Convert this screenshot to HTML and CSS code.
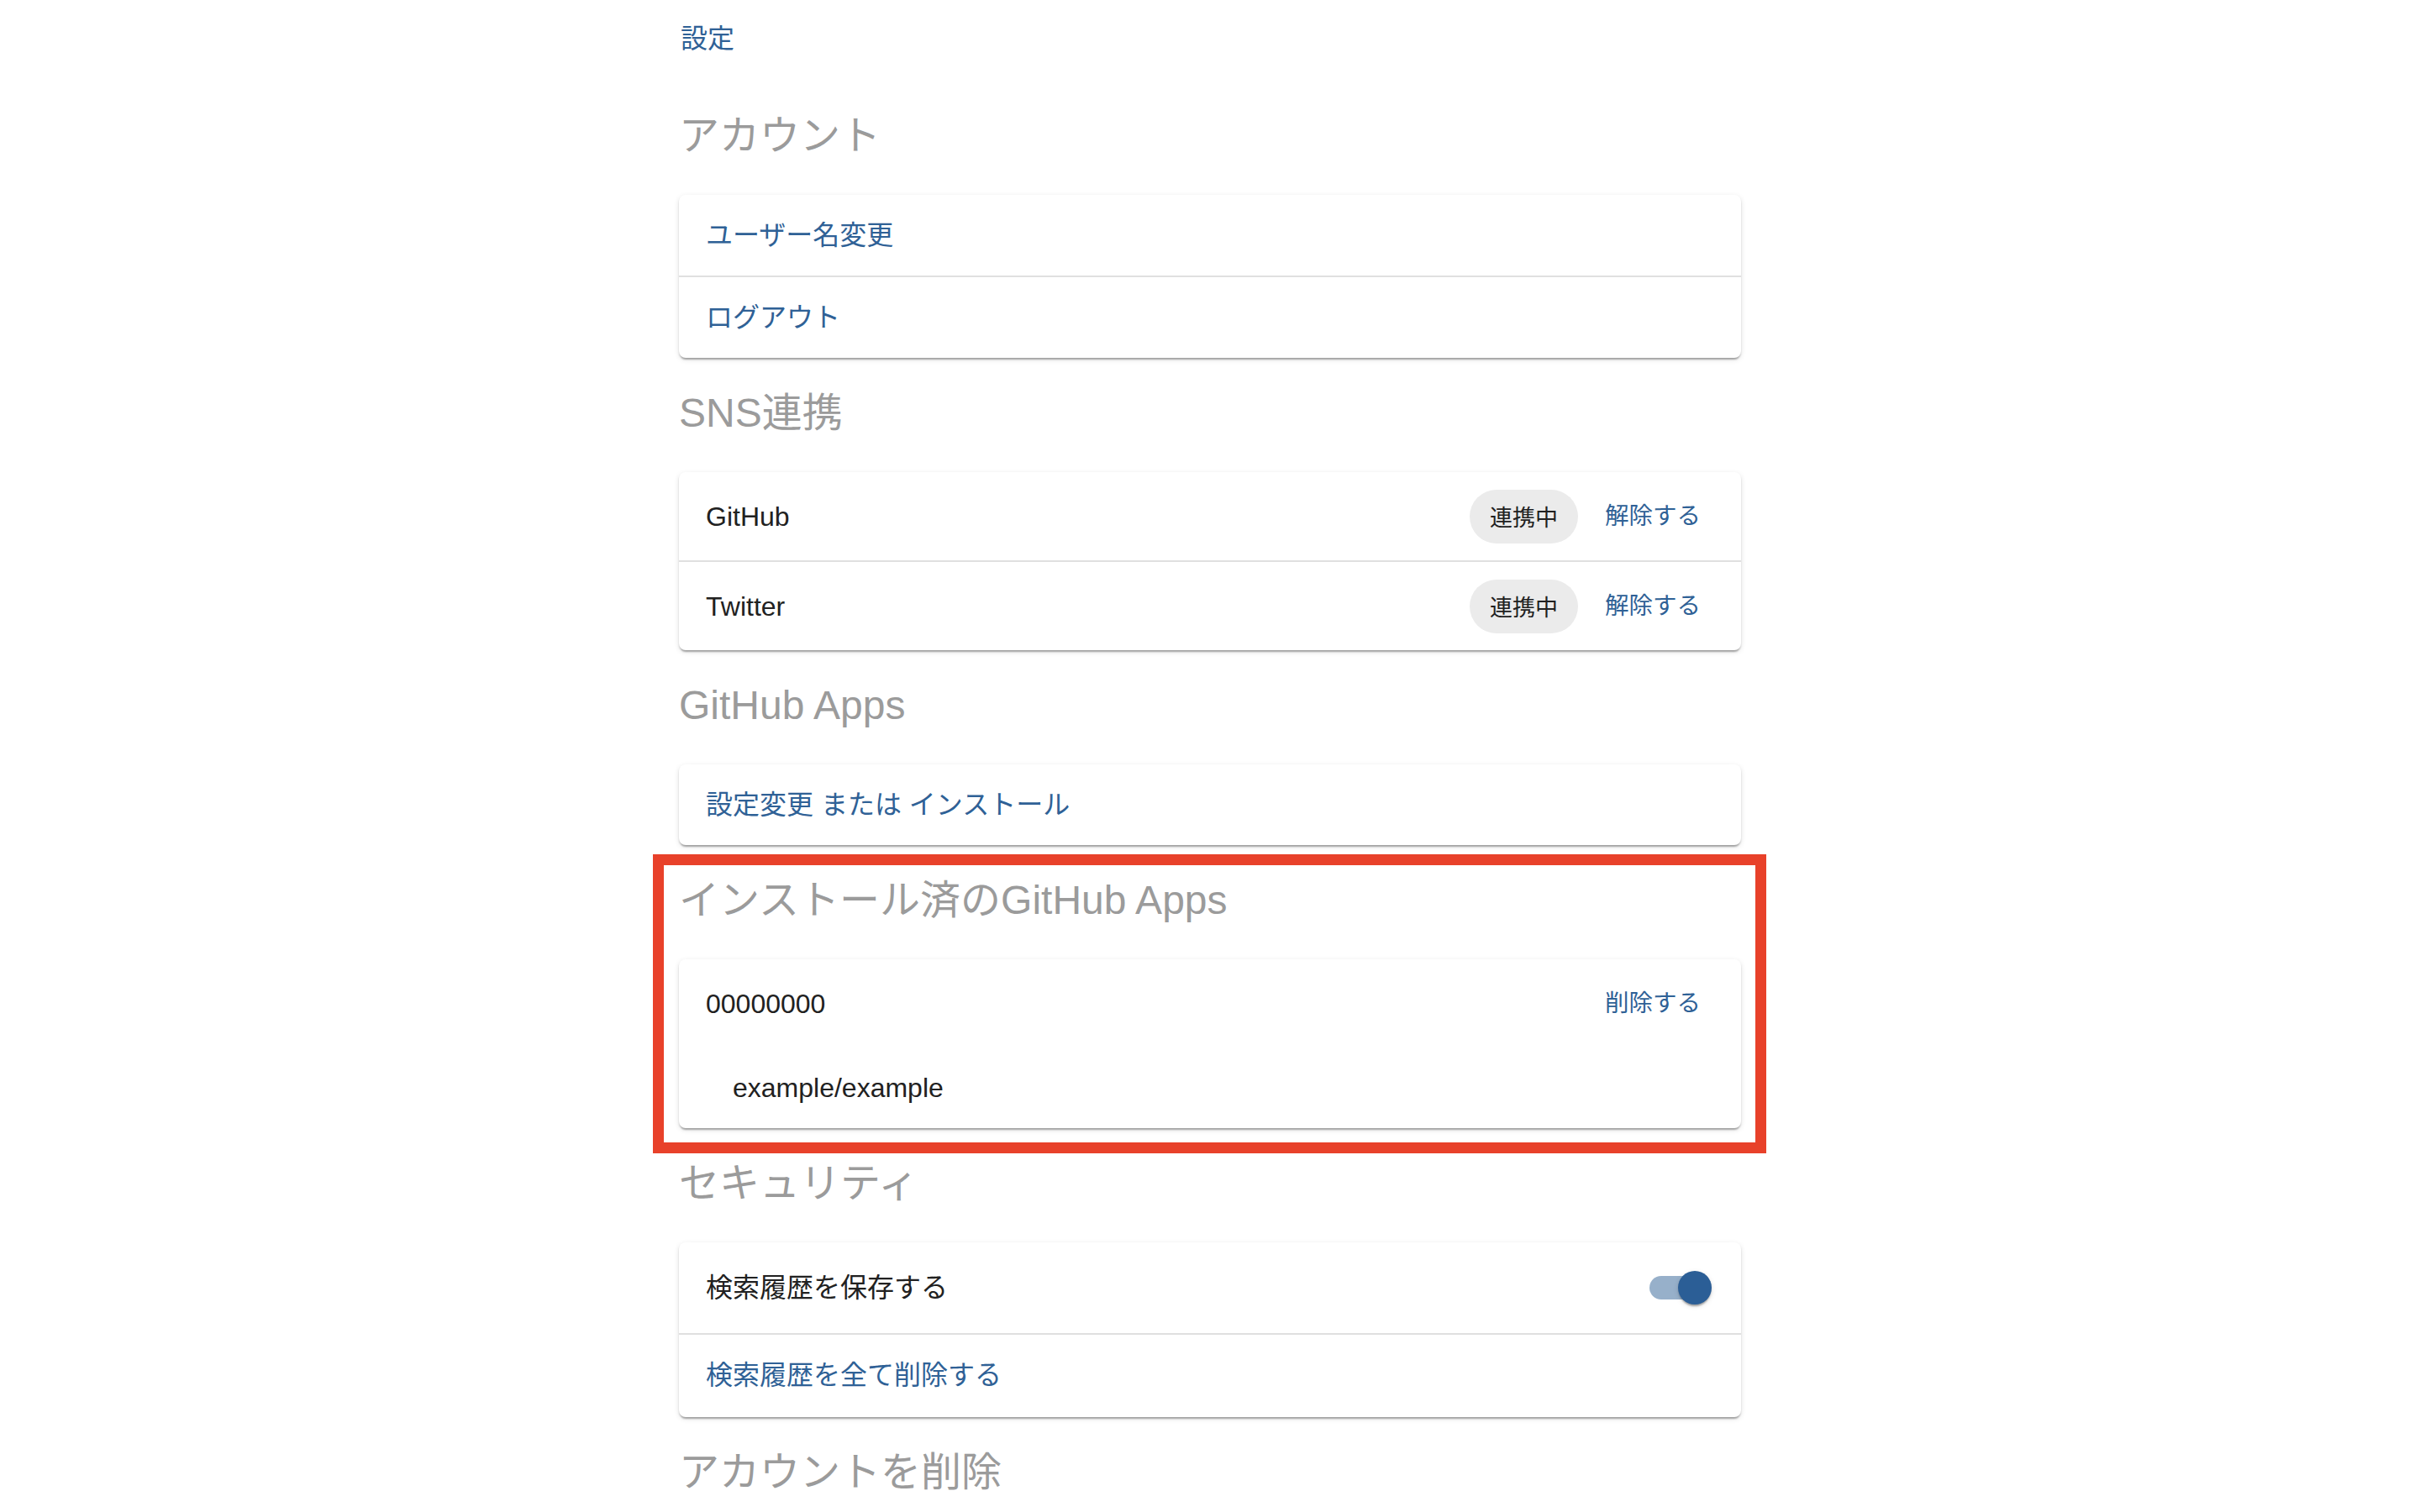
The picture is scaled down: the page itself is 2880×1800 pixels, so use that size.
FILE: index.html
```html
<!DOCTYPE html>
<html lang="ja">
<head>
<meta charset="utf-8">
<title>設定</title>
<link rel="stylesheet" href="styles.css">
</head>
<body>
<div class="page">
  <a class="crumb">設定</a>

  <h2 class="section-title first">アカウント</h2>
  <div class="card">
    <div class="row divider"><span class="row-text link">ユーザー名変更</span></div>
    <div class="row"><span class="row-text link">ログアウト</span></div>
  </div>

  <h2 class="section-title">SNS連携</h2>
  <div class="card">
    <div class="row action-row divider">
      <span class="row-text">GitHub</span>
      <div class="actions">
        <span class="chip">連携中</span>
        <span class="btn">解除する</span>
      </div>
    </div>
    <div class="row action-row">
      <span class="row-text">Twitter</span>
      <div class="actions">
        <span class="chip">連携中</span>
        <span class="btn">解除する</span>
      </div>
    </div>
  </div>

  <h2 class="section-title">GitHub Apps</h2>
  <div class="card">
    <div class="row"><span class="row-text link">設定変更 または インストール</span></div>
  </div>

  <div class="highlight">
    <h2 class="section-title">インストール済のGitHub Apps</h2>
    <div class="card">
      <div class="row action-row">
        <span class="row-text">00000000</span>
        <div class="actions">
          <span class="btn">削除する</span>
        </div>
      </div>
      <div class="row nested"><span class="row-text">example/example</span></div>
    </div>
  </div>

  <h2 class="section-title">セキュリティ</h2>
  <div class="card">
    <div class="row switch-row divider">
      <span class="row-text">検索履歴を保存する</span>
      <div class="actions">
        <span class="switch"><span class="track"></span><span class="thumb"></span></span>
      </div>
    </div>
    <div class="row last-row"><span class="row-text link">検索履歴を全て削除する</span></div>
  </div>

  <h2 class="section-title">アカウントを削除</h2>
</div>
</body>
</html>
```

FILE: styles.css
```css
html, body {
  margin: 0;
  padding: 0;
  background: #ffffff;
}

body {
  font-family: "Liberation Sans", "Noto Sans CJK JP", sans-serif;
  color: #212121;
}

.page {
  width: 1264px;
  margin: 0 auto;
  padding-top: 22px;
  padding-bottom: 40px;
}

.crumb {
  display: block;
  font-size: 32px;
  line-height: 48px;
  color: #2f6196;
  padding-left: 2px;
}

.section-title {
  font-size: 48px;
  line-height: 64px;
  font-weight: 400;
  color: #9b9b9b;
  margin: 34px 0 38px;
}

.section-title.first {
  margin-top: 60px;
}

.card {
  background: #ffffff;
  border-radius: 8px;
  box-shadow: 0 4px 2px -2px rgba(0, 0, 0, 0.2), 0 2px 2px 0 rgba(0, 0, 0, 0.14), 0 2px 6px 0 rgba(0, 0, 0, 0.12);
  overflow: hidden;
}

.row {
  display: flex;
  align-items: center;
  padding: 16px 32px;
}

.row.divider {
  border-bottom: 2px solid #e0e0e0;
}

.row.nested {
  padding-left: 64px;
}

.row.switch-row {
  padding-top: 16px;
  padding-bottom: 16px;
}

.row.last-row {
  padding-bottom: 18px;
}

.row-text {
  font-size: 32px;
  line-height: 48px;
  margin: 8px 0;
}

.link {
  color: #2f6196;
}

.actions {
  margin-left: auto;
  display: flex;
  align-items: center;
}

.chip {
  display: inline-flex;
  align-items: center;
  height: 64px;
  padding: 0 24px;
  border-radius: 32px;
  background: #ebebeb;
  font-size: 27px;
  color: #212121;
}

.btn {
  display: inline-block;
  font-size: 28.5px;
  line-height: 49px;
  padding: 12px 16px;
  margin-left: 16px;
  color: #2f6196;
}

.switch {
  position: relative;
  display: inline-block;
  width: 116px;
  height: 76px;
  margin-right: -15px;
}

.track {
  position: absolute;
  left: 24px;
  top: 24px;
  width: 68px;
  height: 28px;
  border-radius: 14px;
  background: #2f6196;
  opacity: 0.5;
}

.thumb {
  position: absolute;
  left: 58px;
  top: 18px;
  width: 40px;
  height: 40px;
  border-radius: 50%;
  background: #2b5e96;
  box-shadow: 0 4px 2px -2px rgba(0, 0, 0, 0.2), 0 2px 2px 0 rgba(0, 0, 0, 0.14), 0 2px 6px 0 rgba(0, 0, 0, 0.12);
}

.highlight {
  position: relative;
}

.highlight::after {
  content: "";
  position: absolute;
  top: -23px;
  left: -31px;
  right: -30px;
  bottom: -30px;
  border: 13px solid #e8412a;
  pointer-events: none;
}
```
